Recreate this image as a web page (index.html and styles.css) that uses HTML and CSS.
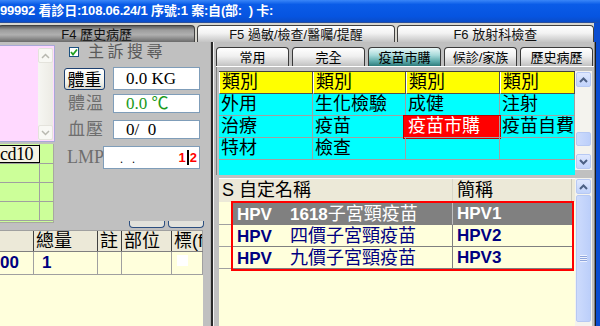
FILE: index.html
```html
<!DOCTYPE html>
<html lang="zh-Hant">
<head>
  <meta charset="UTF-8" />
  <title>看診 - 歷史病歷</title>
  <link rel="stylesheet" href="styles.css">
</head>
<body>
  <div class="window">
    <div class="titlebar">99992 看診日:108.06.24/1 序號:1 案:自(部:&nbsp; ) 卡:</div>

    <div class="maintabs">
      <div class="mtab active">F4 歷史病歷</div>
      <div class="mtab">F5 過敏/檢查/醫囑/提醒</div>
      <div class="mtab">F6 放射科檢查</div>
    </div>

    <div class="main">
      <!-- left: history + vitals -->
      <div class="leftpane">
        <div class="lefttop">
          <div class="leftcol">
            <div class="pinkbox">
              <div class="lscroll">
                <div class="lbtn"><svg width="9" height="6" viewBox="0 0 9 6"><path d="M1 5 L4.5 1.5 L8 5" fill="none" stroke="#b8b8b0" stroke-width="1.5"/></svg></div>
                <div class="ltrack"></div>
                <div class="lbtn"><svg width="9" height="6" viewBox="0 0 9 6"><path d="M1 1 L4.5 4.5 L8 1" fill="none" stroke="#b8b8b0" stroke-width="1.5"/></svg></div>
              </div>
            </div>
            <div class="greentable">
              <div class="grow">
                <div class="gcell first"><span class="cdhead">cd10</span></div>
                <div class="gcell"></div>
              </div>
              <div class="grow"><div class="gcell first"></div><div class="gcell"></div></div>
              <div class="grow"><div class="gcell first"></div><div class="gcell"></div></div>
              <div class="grow"><div class="gcell first"></div><div class="gcell"></div></div>
            </div>
          </div>

          <div class="vitals">
            <div class="chkrow">
              <span class="chk"><svg width="8" height="8" viewBox="0 0 8 8"><path d="M1 4 L3 6.5 L7 1.5" fill="none" stroke="#21a121" stroke-width="1.8"/></svg></span>
              <span class="chklabel">主訴搜尋</span>
            </div>
            <div class="vrow r1">
              <button class="vbtn">體重</button>
              <div class="vbox">0.0 KG</div>
            </div>
            <div class="vrow r2">
              <span class="vlabel">體溫</span>
              <div class="vbox green">0.0 ℃</div>
            </div>
            <div class="vrow r3">
              <span class="vlabel">血壓</span>
              <div class="vbox">0/&nbsp; 0</div>
            </div>
            <div class="vrow r4">
              <span class="vlabel lmp">LMP</span>
              <div class="vbox wide">
                <span class="dots">.&nbsp;&nbsp; .</span>
                <span class="cursor">1<i></i>2</span>
              </div>
            </div>
            <div class="minibtns">
              <span class="minibtn"></span>
              <span class="minibtn"></span>
            </div>
          </div>
        </div>

        <div class="orders">
          <div class="ohead">
            <div class="oc c1"></div>
            <div class="oc c2">總量</div>
            <div class="oc c3">註</div>
            <div class="oc c4">部位</div>
            <div class="oc c5">標(f</div>
          </div>
          <div class="orow">
            <div class="oc c1 num">00</div>
            <div class="oc c2 num">1</div>
            <div class="oc c3"></div>
            <div class="oc c4"></div>
            <div class="oc c5"><span class="tick"></span></div>
          </div>
        </div>
      </div>

      <div class="splitter"></div>

      <!-- right: item picker -->
      <div class="rightpane">
        <div class="subtabs">
          <div class="stab">常用</div>
          <div class="stab">完全</div>
          <div class="stab active">疫苗市購</div>
          <div class="stab">候診/家族</div>
          <div class="stab">歷史病歷</div>
        </div>

        <div class="catbox">
          <div class="catgrid">
            <div class="crow head">
              <div class="cc w1">類別</div><div class="cc w2">類別</div><div class="cc w3">類別</div><div class="cc w4">類別</div>
            </div>
            <div class="crow">
              <div class="cc w1">外用</div><div class="cc w2">生化檢驗</div><div class="cc w3">成健</div><div class="cc w4">注射</div>
            </div>
            <div class="crow">
              <div class="cc w1">治療</div><div class="cc w2">疫苗</div><div class="cc w3 picked">疫苗市購</div><div class="cc w4">疫苗自費</div>
            </div>
            <div class="crow">
              <div class="cc w1">特材</div><div class="cc w2">檢查</div><div class="cc w3"></div><div class="cc w4"></div>
            </div>
          </div>
          <div class="xpscroll cat">
            <div class="xpbtn"><svg width="9" height="6" viewBox="0 0 9 6"><path d="M1 5 L4.5 1.5 L8 5" fill="none" stroke="#4d6185" stroke-width="2"/></svg></div>
            <div class="xptrack"><div class="xpthumb"></div></div>
            <div class="xpbtn"><svg width="9" height="6" viewBox="0 0 9 6"><path d="M1 1 L4.5 4.5 L8 1" fill="none" stroke="#4d6185" stroke-width="2"/></svg></div>
          </div>
        </div>

        <div class="listbox">
          <div class="list">
            <div class="lhead">
              <div class="ls">S</div>
              <div class="lname">自定名稱</div>
              <div class="labbr">簡稱</div>
            </div>
            <div class="lrows">
              <div class="lrow">
                <div class="ls"></div>
                <div class="lname sel"><span class="code">HPV</span><b>1618</b>子宮頸疫苗</div>
                <div class="labbr sel">HPV1</div>
              </div>
              <div class="lrow">
                <div class="ls"></div>
                <div class="lname"><span class="code">HPV</span>四價子宮頸疫苗</div>
                <div class="labbr">HPV2</div>
              </div>
              <div class="lrow">
                <div class="ls"></div>
                <div class="lname"><span class="code">HPV</span>九價子宮頸疫苗</div>
                <div class="labbr">HPV3</div>
              </div>
            </div>
            <div class="redframe"></div>
          </div>
          <div class="xpscroll lst">
            <div class="xpbtn"><svg width="9" height="6" viewBox="0 0 9 6"><path d="M1 5 L4.5 1.5 L8 5" fill="none" stroke="#4d6185" stroke-width="2"/></svg></div>
            <div class="xpthumb big"><span class="grip"></span></div>
          </div>
        </div>
      </div>

      <div class="winedge"></div>
    </div>
  </div>
</body>
</html>
```

FILE: styles.css
```css
* {
  box-sizing: border-box;
}

body {
  margin: 0;
  width: 600px;
  height: 326px;
  overflow: hidden;
  background: #c0c0c0;
  font-family: "Liberation Sans", "Noto Sans CJK TC", sans-serif;
  color: #000;
}

.window {
  display: flex;
  flex-direction: column;
  height: 326px;
}

/* title bar */
.titlebar {
  height: 22px;
  background: linear-gradient(#3a86f8, #0a5ce8 20%, #0654e0 75%, #0a4cc8);
  color: #fff;
  font-weight: bold;
  font-size: 13px;
  line-height: 22px;
  white-space: nowrap;
  letter-spacing: -0.2px;
}

/* F4/F5/F6 tabs */
.maintabs {
  height: 20px;
  display: flex;
  gap: 2px;
  padding-top: 2px;
  background: #d8d6ce;
  border-top: 1px solid #2a4f9a;
  border-right: 6px solid #0a4cd0;
}

.mtab {
  flex: 1;
  border: 1px solid #404040;
  border-bottom: none;
  border-radius: 4px 4px 0 0;
  background: linear-gradient(#ffffff, #f2f2f2 45%, #c4c4c4);
  font-size: 13px;
  line-height: 17px;
  text-align: center;
  color: #111;
}

.mtab.active {
  margin-left: -2px;
  background: linear-gradient(#5a5a5a, #9c9c9c 25%, #b0b0b0 55%, #6a6a6a);
}

.main {
  flex: 1;
  display: flex;
  min-height: 0;
}

/* ---------- left pane ---------- */
.leftpane {
  width: 210px;
  display: flex;
  flex-direction: column;
}

.lefttop {
  height: 188px;
  display: flex;
}

.leftcol {
  width: 55px;
  padding-top: 3px;
}

.pinkbox {
  height: 97px;
  background: #ffd9ff;
  border: 1px solid #a8a8d8;
  border-left: none;
  display: flex;
  justify-content: flex-end;
  padding: 2px 1px 1px 0;
}

.lscroll {
  width: 15px;
  display: flex;
  flex-direction: column;
  background: linear-gradient(90deg, #f6f6f2, #ecebe4);
}

.lbtn {
  height: 15px;
  border: 1px solid #e4e3dc;
  border-radius: 2px;
  background: #f8f8f4;
  display: flex;
  align-items: center;
  justify-content: center;
}

.ltrack {
  flex: 1;
}

.greentable {
  margin-top: 2px;
  height: 79px;
  width: 54px;
  background: #ccff99;
  border-right: 1px solid #a8a8a0;
  border-bottom: 1px solid #a8a8a0;
}

.grow {
  display: flex;
  height: 19px;
  border-bottom: 1px solid #a0a0a0;
}

.grow:first-child {
  height: 20px;
}

.gcell {
  flex: 1;
}

.gcell.first {
  flex: none;
  width: 40px;
  border-right: 1px solid #a0a0a0;
}

.cdhead {
  display: block;
  height: 18px;
  width: 40px;
  margin-top: 1px;
  background: #f5f3e4;
  border: 1px solid #000;
  border-left: none;
  font-family: "Liberation Serif", serif;
  font-size: 18px;
  line-height: 16px;
  letter-spacing: -0.5px;
}

/* vitals */
.vitals {
  flex: 1;
  display: flex;
  flex-direction: column;
  padding-top: 4px;
}

.chkrow {
  display: flex;
  align-items: center;
  height: 12px;
  padding-left: 14px;
}

.chk {
  width: 10px;
  height: 10px;
  border: 1px solid #1c5180;
  background: #fff;
  display: flex;
  align-items: center;
  justify-content: center;
}

.chklabel {
  margin-left: 9px;
  font-size: 16px;
  letter-spacing: 3.5px;
  color: #5a5a5a;
  line-height: 12px;
}

.vrow {
  display: flex;
  align-items: center;
}

.vrow.r1 { margin-top: 9px; height: 23px; }
.vrow.r2 { margin-top: 4px; height: 19px; }
.vrow.r3 { margin-top: 7px; height: 19px; }
.vrow.r4 { margin-top: 7px; height: 23px; }

.vbtn {
  margin-left: 9px;
  width: 41px;
  height: 22px;
  padding: 0;
  border: 1px solid #1d3f6f;
  border-radius: 3px;
  background: linear-gradient(#ffffff, #f0f0ea 70%, #d8d8d0);
  font-family: "Noto Sans CJK TC", sans-serif;
  font-size: 17px;
  line-height: 18px;
  color: #000;
}

.vlabel {
  width: 58px;
  padding-left: 13px;
  font-size: 17px;
  letter-spacing: 1px;
  color: #6e6e6e;
  line-height: 19px;
}

.vlabel.lmp {
  width: 48px;
  padding-left: 12px;
  font-family: "Liberation Serif", serif;
  font-size: 18px;
  letter-spacing: 0;
}

.vrow.r1 .vbox {
  margin-left: 8px;
}

.vbox {
  width: 87px;
  height: 100%;
  background: #fff;
  border: 1px solid #7f9db9;
  padding-left: 12px;
  font-family: "Liberation Serif", "Noto Sans CJK TC", serif;
  font-size: 17px;
  line-height: 19px;
  display: flex;
  align-items: center;
}

.vbox.green {
  color: #1a9a1a;
}

.vbox.wide {
  width: 97px;
  padding-left: 16px;
  justify-content: space-between;
  padding-right: 2px;
}

.dots {
  font-size: 12px;
  margin-top: 4px;
}

.cursor {
  display: flex;
  align-items: center;
  color: #ff0000;
  font-family: "Liberation Sans", sans-serif;
  font-weight: bold;
  font-size: 13px;
}

.cursor i {
  display: block;
  width: 2px;
  height: 15px;
  margin: 0 1px;
  background: #000;
}

.minibtns {
  margin-top: auto;
  margin-bottom: 2px;
  display: flex;
  gap: 3px;
  padding-left: 74px;
}

.minibtn {
  width: 36px;
  height: 7px;
  border: 1px solid #2c4f80;
  border-top: none;
  border-radius: 0 0 4px 4px;
  background: #e2e2dc;
}

/* bottom-left order grid */
.orders {
  flex: 1;
  width: 203px;
  background: #ffffdc;
}

.ohead,
.orow {
  display: flex;
}

.ohead {
  height: 22px;
  background: #ece9d8;
  border-bottom: 1px solid #808080;
  border-top: 1px solid #a0a0a0;
}

.orow {
  height: 23px;
  border-bottom: 1px solid #a0a0a0;
}

.oc {
  font-size: 18px;
  line-height: 20px;
  border-right: 1px solid #a0a0a0;
  padding-left: 2px;
  overflow: hidden;
  white-space: nowrap;
}

.ohead .oc {
  border-right: 1px solid #404040;
}

.oc.c1 { width: 34px; }
.oc.c2 { width: 64px; }
.oc.c3 { width: 24px; }
.oc.c4 { width: 50px; }
.oc.c5 { flex: 1; border-right: 1px solid #a0a0a0; }

.oc.num {
  color: #000080;
  font-weight: bold;
  font-size: 17px;
  line-height: 22px;
}

.oc.c1.num {
  padding-left: 0;
}

.oc.c2.num {
  padding-left: 8px;
}

.tick {
  display: block;
  width: 11px;
  height: 11px;
  margin: 3px 0 0 3px;
  background: #fff;
}

.splitter {
  width: 4px;
  border-left: 1px solid #b0b0b0;
  background: #2a2a2a;
  border-right: 1px solid #f4f4f4;
}

/* ---------- right pane ---------- */
.rightpane {
  flex: 1;
  display: flex;
  flex-direction: column;
  padding-left: 2px;
}

.subtabs {
  height: 25px;
  display: flex;
  gap: 3px;
  padding-top: 5px;
  padding-right: 1px;
  border-bottom: 1px solid #fff;
}

.stab {
  flex: 1;
  border: 1px solid #3a3a3a;
  border-bottom: none;
  border-radius: 4px 4px 0 0;
  background: linear-gradient(#ffffff, #f0f0f0 45%, #c2c2c2);
  font-size: 13px;
  line-height: 19px;
  text-align: center;
}

.stab.active {
  background: linear-gradient(#eaf8f8, #a8dada 40%, #5aa8a8 75%, #2f7c7c);
}

.catbox {
  height: 108px;
  display: flex;
  padding: 4px 2px 0 2px;
  border-left: 1px solid #808080;
}

.catgrid {
  width: 356px;
  background: #00ffff;
  border-top: 1px solid #404040;
}

.crow {
  display: flex;
  height: 22px;
}

.cc {
  height: 22px;
  border-right: 1px solid #a0a0a0;
  border-bottom: 1px solid #a0a0a0;
  font-size: 18px;
  line-height: 21px;
  padding-left: 2px;
  white-space: nowrap;
  overflow: hidden;
}

.crow.head .cc {
  background: #ffff00;
  border-right: 1px solid #505050;
  border-bottom: 1px solid #505050;
  border-left: 1px solid #fff;
}

.cc.w1 { width: 94px; }
.cc.w2 { width: 93px; }
.cc.w3 { width: 94px; }
.cc.w4 { flex: 1; }

.cc.picked {
  background: #ff0000;
  color: #fff;
  outline: 1px solid #c00000;
  margin-left: -2px;
  width: 96px;
  padding-left: 4px;
}

/* XP style scrollbars */
.xpscroll {
  width: 17px;
  display: flex;
  flex-direction: column;
  background: #f4f3ee;
}

.xpscroll.cat {
  height: 99px;
}

.xpbtn {
  height: 15px;
  margin: 1px;
  border: 1px solid #b7c9f3;
  border-radius: 2px;
  background: linear-gradient(#dfe8fe, #c1d3fb);
  display: flex;
  align-items: center;
  justify-content: center;
}

.xptrack {
  flex: 1;
  display: flex;
  flex-direction: column;
}

.xpthumb {
  margin: 44px 1px 0;
  height: 14px;
  border: 1px solid #b7c9f3;
  border-radius: 2px;
  background: linear-gradient(90deg, #cddbfc, #bccffa);
}

.xpthumb.big {
  flex: 1;
  margin: 0 1px 4px;
  height: auto;
  display: flex;
  align-items: center;
  justify-content: center;
}

.grip {
  width: 7px;
  height: 7px;
  background: repeating-linear-gradient(#eef2fe 0 1px, #8ea5dc 1px 2px);
}

.listbox {
  flex: 1;
  display: flex;
  padding: 3px 2px 0 3px;
  background: #c0c0c0;
}

.list {
  position: relative;
  width: 356px;
  background: #ffffdc;
  border-top: 1px solid #fff;
}

.lhead,
.lrow {
  display: flex;
}

.lhead {
  height: 23px;
  background: #ece9d8;
  font-size: 18px;
  line-height: 22px;
}

.ls {
  width: 14px;
  padding-left: 3px;
}

.lname {
  width: 219px;
  padding-left: 7px;
  white-space: nowrap;
  overflow: hidden;
}

.lhead .lname {
  padding-left: 6px;
}

.labbr {
  flex: 1;
  padding-left: 4px;
  border-left: 1px solid #d8d6c8;
}

.lhead .labbr {
  border-right: 1px solid #c8c6b8;
  margin-right: 3px;
}

.lrows {
  margin-top: 1px;
}

.lrow {
  height: 22px;
  font-size: 18px;
  line-height: 22px;
  color: #000080;
}

.lrow .ls {
  border-bottom: 1px solid #a0a0a0;
}

.lrow .lname,
.lrow .labbr {
  border-bottom: 1px solid #808080;
}

.lrow .labbr {
  border-left: 1px solid #808080;
  font-weight: bold;
  font-size: 17px;
  margin-right: 3px;
}

.lrow .lname {
  padding-left: 4px;
}

.code {
  display: inline-block;
  width: 53px;
  font-weight: bold;
  font-size: 17px;
}

.lrow b {
  font-size: 17px;
}

.sel {
  background: #808080;
  color: #fff;
}

.lrow .sel.labbr {
  border-left-color: #c0c0c0;
}

.redframe {
  position: absolute;
  left: 12px;
  top: 22px;
  width: 343px;
  height: 70px;
  border: 2px solid #ff0000;
  pointer-events: none;
}

.xpscroll.lst {
  height: 148px;
}

.winedge {
  width: 6px;
  border-left: 1px solid #808080;
  background: linear-gradient(90deg, #1a1a1a 0 1px, #0a4cd0 1px);
}
```
